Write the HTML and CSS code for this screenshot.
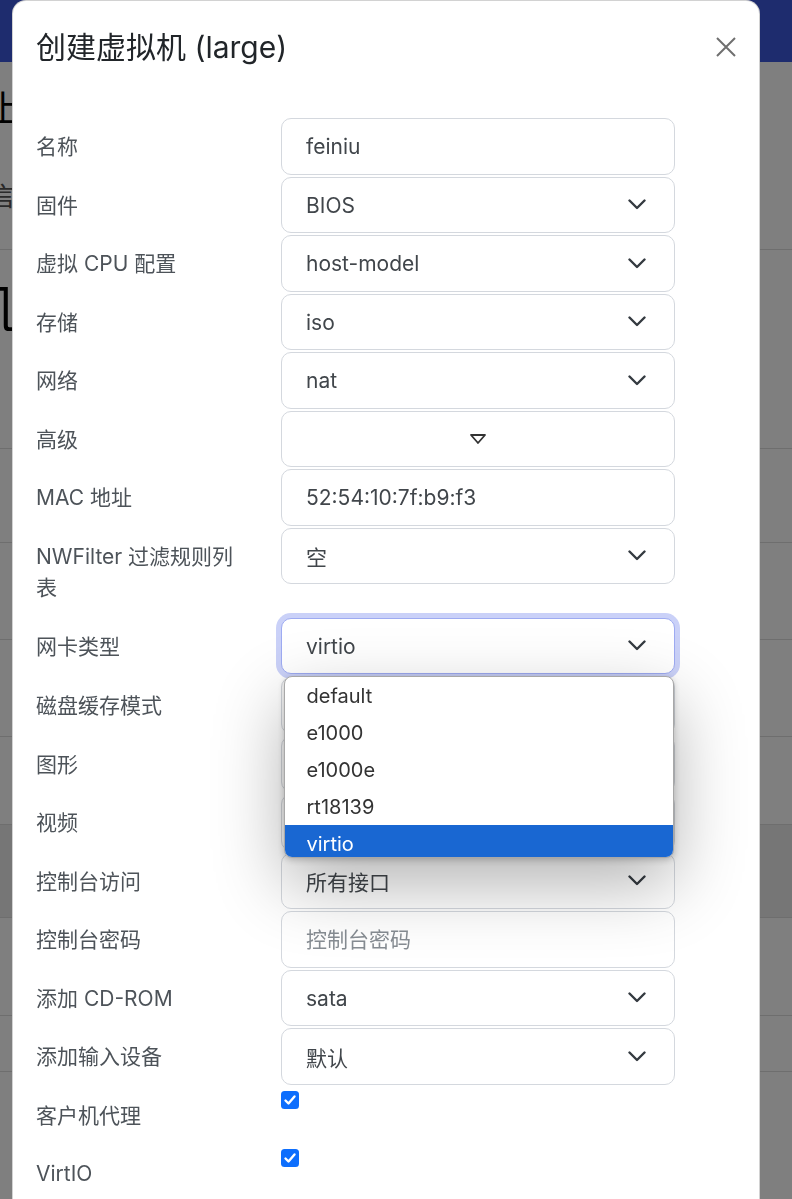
FILE: index.html
```html
<!DOCTYPE html>
<html lang="zh-CN">
<head>
    <meta charset="UTF-8">
    <meta name="viewport" content="width=device-width, initial-scale=1.0">
    <title>创建虚拟机</title>
    <link rel="stylesheet" href="styles.css">
</head>
<body>
    <!-- page behind the dialog -->
    <div class="page">
        <header class="navbar"></header>
        <section class="block intro">
            <h2 class="page-title">上传</h2>
            <p class="page-note">言</p>
        </section>
        <section class="block vm-head"><span class="vm-name">几</span></section>
        <div class="block h94"></div>
        <div class="block h97"></div>
        <div class="block h97"></div>
        <div class="block h88"></div>
        <div class="block band"></div>
        <div class="block h98"></div>
        <div class="block h56"></div>
    </div>

    <div class="backdrop"></div>

    <div class="modal">
        <div class="modal-header">
            <h5 class="modal-title">创建虚拟机 (large)</h5>
            <button class="btn-close" type="button">
                <svg width="22" height="22" viewBox="0 0 22 22"><path d="M2 2l18 18M20 2 2 20" fill="none" stroke="#6f6f6f" stroke-width="2"/></svg>
            </button>
        </div>

        <form class="modal-body">
            <div class="form-row">
                <label>名称</label>
                <input class="field" type="text" value="feiniu">
            </div>
            <div class="form-row">
                <label>固件</label>
                <div class="field select"><span>BIOS</span><svg class="chevron" viewBox="0 0 18 11"><path d="M1.5 1.5 9 9l7.5-7.5"/></svg></div>
            </div>
            <div class="form-row">
                <label>虚拟 CPU 配置</label>
                <div class="field select"><span>host-model</span><svg class="chevron" viewBox="0 0 18 11"><path d="M1.5 1.5 9 9l7.5-7.5"/></svg></div>
            </div>
            <div class="form-row">
                <label>存储</label>
                <div class="field select"><span>iso</span><svg class="chevron" viewBox="0 0 18 11"><path d="M1.5 1.5 9 9l7.5-7.5"/></svg></div>
            </div>
            <div class="form-row">
                <label>网络</label>
                <div class="field select"><span>nat</span><svg class="chevron" viewBox="0 0 18 11"><path d="M1.5 1.5 9 9l7.5-7.5"/></svg></div>
            </div>
            <div class="form-row">
                <label>高级</label>
                <button class="field toggle" type="button">
                    <svg width="18" height="12" viewBox="0 0 18 12"><path d="M2 2h14L9 10z" fill="none" stroke="#333" stroke-width="1.8" stroke-linejoin="round"/></svg>
                </button>
            </div>
            <div class="form-row">
                <label>MAC 地址</label>
                <input class="field" type="text" value="52:54:10:7f:b9:f3">
            </div>
            <div class="form-row wide-label">
                <label>NWFilter 过滤规则列表</label>
                <div class="field select"><span>空</span><svg class="chevron" viewBox="0 0 18 11"><path d="M1.5 1.5 9 9l7.5-7.5"/></svg></div>
            </div>
            <div class="form-row open-row">
                <label>网卡类型</label>
                <div class="field-wrap">
                    <div class="field select focused"><span>virtio</span><svg class="chevron" viewBox="0 0 18 11"><path d="M1.5 1.5 9 9l7.5-7.5"/></svg></div>
                    <ul class="options">
                        <li>default</li>
                        <li>e1000</li>
                        <li>e1000e</li>
                        <li>rt18139</li>
                        <li class="selected">virtio</li>
                    </ul>
                </div>
            </div>
            <div class="form-row">
                <label>磁盘缓存模式</label>
                <div class="field select"><span>default</span><svg class="chevron" viewBox="0 0 18 11"><path d="M1.5 1.5 9 9l7.5-7.5"/></svg></div>
            </div>
            <div class="form-row">
                <label>图形</label>
                <div class="field select"><span>vnc</span><svg class="chevron" viewBox="0 0 18 11"><path d="M1.5 1.5 9 9l7.5-7.5"/></svg></div>
            </div>
            <div class="form-row">
                <label>视频</label>
                <div class="field select"><span>virtio</span><svg class="chevron" viewBox="0 0 18 11"><path d="M1.5 1.5 9 9l7.5-7.5"/></svg></div>
            </div>
            <div class="form-row">
                <label>控制台访问</label>
                <div class="field select"><span>所有接口</span><svg class="chevron" viewBox="0 0 18 11"><path d="M1.5 1.5 9 9l7.5-7.5"/></svg></div>
            </div>
            <div class="form-row">
                <label>控制台密码</label>
                <input class="field" type="password" placeholder="控制台密码">
            </div>
            <div class="form-row">
                <label>添加 CD-ROM</label>
                <div class="field select"><span>sata</span><svg class="chevron" viewBox="0 0 18 11"><path d="M1.5 1.5 9 9l7.5-7.5"/></svg></div>
            </div>
            <div class="form-row">
                <label>添加输入设备</label>
                <div class="field select"><span>默认</span><svg class="chevron" viewBox="0 0 18 11"><path d="M1.5 1.5 9 9l7.5-7.5"/></svg></div>
            </div>
            <div class="form-row check-row">
                <label>客户机代理</label>
                <span class="checkbox"><svg width="18" height="18" viewBox="0 0 18 18"><path d="M4.5 9.5l3 3 6-7" fill="none" stroke="#fff" stroke-width="2.4" stroke-linecap="round" stroke-linejoin="round"/></svg></span>
            </div>
            <div class="form-row check-row">
                <label>VirtIO</label>
                <span class="checkbox"><svg width="18" height="18" viewBox="0 0 18 18"><path d="M4.5 9.5l3 3 6-7" fill="none" stroke="#fff" stroke-width="2.4" stroke-linecap="round" stroke-linejoin="round"/></svg></span>
            </div>
        </form>
    </div>
</body>
</html>
```

FILE: styles.css
```css
body {
    margin: 0;
    height: 1199px;
    overflow: hidden;
    font-family: 'Inter', 'Noto Sans CJK SC', sans-serif;
    background-color: #fff;
    position: relative;
}

/* page under the backdrop */
.navbar {
    height: 62px;
    background-color: #3c58dc;
}

.block {
    border-bottom: 1px solid #dcdcdc;
    box-sizing: border-box;
    overflow: hidden;
}

.intro {
    height: 188px;
    padding-top: 26px;
}

.page-title {
    margin: 0 0 0 -14px;
    font-size: 36px;
    font-weight: 400;
    line-height: 42px;
    color: #000;
}

.page-note {
    margin: 52px 0 0 -10px;
    font-size: 26px;
    line-height: 30px;
    color: #555;
}

.vm-head {
    height: 199px;
    padding-top: 30px;
}

.vm-name {
    display: block;
    margin-left: -30px;
    font-size: 52px;
    line-height: 60px;
    color: #000;
}

.h94 { height: 94px; }
.h97 { height: 97px; }
.h88 { height: 88px; }
.h98 { height: 98px; }
.h56 { height: 56px; }

.band {
    height: 93px;
    background-color: #ececec;
}

.backdrop {
    position: fixed;
    top: 0;
    left: 0;
    right: 0;
    bottom: 0;
    background: rgba(0, 0, 0, 0.5);
}

/* dialog */
.modal {
    position: absolute;
    top: 0;
    left: 12px;
    width: 748px;
    height: 1240px;
    box-sizing: border-box;
    background: #fff;
    border: 1px solid rgba(0, 0, 0, 0.175);
    border-radius: 14px;
}

.modal-header {
    display: flex;
    align-items: center;
    justify-content: space-between;
    padding: 28px 22px 0 23px;
    margin-bottom: 53px;
}

.modal-title {
    margin: 0;
    font-size: 30px;
    font-weight: 400;
    line-height: 36px;
    color: #212529;
}

.btn-close {
    width: 22px;
    height: 22px;
    padding: 0;
    border: none;
    background: none;
}

.btn-close svg {
    display: block;
}

.modal-body {
    padding: 0 23px;
    margin: 0;
}

.form-row {
    display: grid;
    grid-template-columns: 210px 394px;
    column-gap: 35px;
    margin-bottom: 2px;
}

.form-row label {
    padding: 13px 0 12px;
    font-size: 21px;
    line-height: 31px;
    color: #4d5359;
}

.wide-label label {
    padding-bottom: 13px;
}

.open-row {
    margin-bottom: 3px;
}

.field {
    height: 56.5px;
    box-sizing: border-box;
    width: 100%;
    margin: 0;
    padding: 0 28px 0 24px;
    border: 1px solid #d4d8de;
    border-radius: 10px;
    background: #fff;
    font-family: inherit;
    font-size: 21px;
    color: #41464b;
    outline: none;
}

.field::placeholder {
    color: #878d93;
}

.select {
    display: flex;
    align-items: center;
    justify-content: space-between;
}

.select span {
    padding-top: 1px;
}

.chevron {
    width: 18px;
    height: 11px;
    fill: none;
    stroke: #343a40;
    stroke-width: 2.4;
    stroke-linecap: round;
    stroke-linejoin: round;
}

.toggle {
    display: flex;
    align-items: center;
    justify-content: center;
    padding: 0;
    cursor: pointer;
}

.field-wrap {
    position: relative;
    z-index: 5;
}

.focused {
    border-color: #9eabf2;
    box-shadow: 0 0 0 5px #cad1f8;
}

/* open list of the nic select */
.options {
    position: absolute;
    top: calc(100% + 2px);
    left: 2.5px;
    right: 1px;
    height: 182px;
    box-sizing: border-box;
    margin: 0;
    padding: 0;
    list-style: none;
    background: #fff;
    border: 1px solid #a8a8a8;
    border-radius: 8px;
    overflow: hidden;
    box-shadow: 0 2px 6px rgba(0, 0, 0, 0.2), 0 26px 70px rgba(0, 0, 0, 0.3);
}

.options li {
    height: 37px;
    padding-left: 22px;
    display: flex;
    align-items: center;
    font-size: 20px;
    color: #333;
}

.options li.selected {
    background-color: #1967d2;
    color: #fff;
}

.check-row {
    height: 56px;
}

.check-row label {
    padding-top: 13px;
}

.checkbox {
    width: 18px;
    height: 18px;
    margin-top: 4px;
    background-color: #0d6efd;
    border-radius: 3.5px;
}

.checkbox svg {
    display: block;
}
```
